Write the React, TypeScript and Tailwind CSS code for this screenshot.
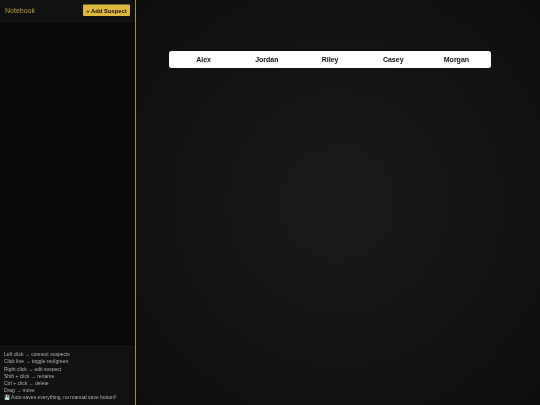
export default function App() {
  const names = ["Alex", "Jordan", "Riley", "Casey", "Morgan"];
  const help = [
    "Left click → connect suspects",
    "Click line → toggle red/green",
    "Right click → edit suspect",
    "Shift + click → rename",
    "Ctrl + click → delete",
    "Drag → move",
    "💾 Auto-saves everything, no manual save button!!",
  ];
  return (
    <div className="h-[405px] w-[540px] overflow-hidden bg-[#0d0d0d]">
      <div className="flex h-[810px] w-[1080px] origin-top-left scale-50 blur-[0.8px] font-['Liberation_Sans',sans-serif]">
        <aside className="flex w-[270px] shrink-0 flex-col bg-[#0a0a0a]">
          <header className="flex h-[43px] shrink-0 items-center justify-between border-b-2 border-[#1c1c1c] bg-[#111111] px-[10px]">
            <span className="text-[14px] text-[#b89f3c]">Notebook</span>
            <button className="flex h-[23px] w-[94px] items-center justify-center rounded-[2px] bg-[#dcb93e] text-[11.7px] font-bold text-[#111111]">
              + Add Suspect
            </button>
          </header>
          <div className="flex-1" />
          <footer className="flex h-[118px] shrink-0 flex-col justify-start border-t-2 border-[#1c1c1c] bg-[#111111] pl-[8px] pt-[8px] text-[10px] leading-[14.4px] text-[#b0b0b0]">
            {help.map((h) => (
              <div key={h} className="whitespace-nowrap">{h}</div>
            ))}
          </footer>
        </aside>
        <div className="w-[2px] shrink-0 bg-[#a8902f]" />
        <main className="flex-1 bg-[radial-gradient(circle_at_50%_50%,#1a1a1a_0%,#0e0e0e_100%)] pl-[66px] pt-[102px]">
          <div className="flex h-[34px] w-[644px] items-center justify-between rounded-[5px] bg-white px-[6px]">
            {names.map((n) => (
              <span key={n} className="flex-1 text-center text-[14px] font-bold text-[#111111]">{n}</span>
            ))}
          </div>
        </main>
      </div>
    </div>
  );
}
